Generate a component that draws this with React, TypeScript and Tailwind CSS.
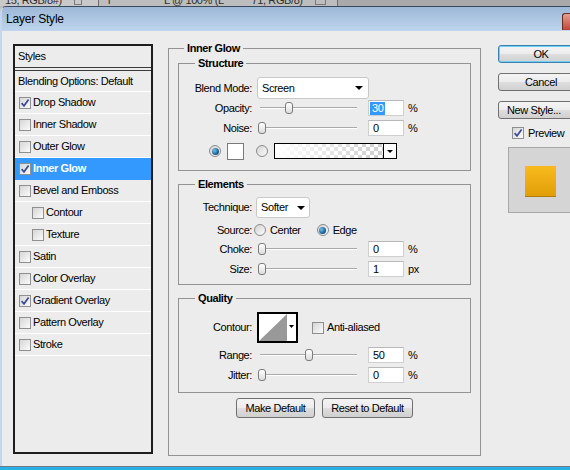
import React from "react";

type Item = { label: string; checked?: boolean; active?: boolean; sub?: boolean };

const styleItems: Item[] = [
  { label: "Drop Shadow", checked: true },
  { label: "Inner Shadow" },
  { label: "Outer Glow" },
  { label: "Inner Glow", checked: true, active: true },
  { label: "Bevel and Emboss" },
  { label: "Contour", sub: true },
  { label: "Texture", sub: true },
  { label: "Satin" },
  { label: "Color Overlay" },
  { label: "Gradient Overlay", checked: true },
  { label: "Pattern Overlay" },
  { label: "Stroke" },
];

function Check({ checked }: { checked?: boolean }) {
  return (
    <span className="flex h-[12px] w-[12px] shrink-0 items-center justify-center border border-[#8e8f8f] bg-gradient-to-br from-[#d6d6d6] to-[#fbfbfb]">
      {checked && (
        <svg width="10" height="10" viewBox="0 0 10 10">
          <path d="M1.6 5.2 L4 7.8 L8.6 1.6" fill="none" stroke="#3b4a96" strokeWidth="1.7" />
        </svg>
      )}
    </span>
  );
}

function Radio({ on }: { on?: boolean }) {
  return (
    <span className="flex h-[12px] w-[12px] shrink-0 items-center justify-center rounded-full border border-[#8a8a8a] bg-gradient-to-br from-[#d4d4d4] to-[#fbfbfb]">
      {on && <span className="h-[7px] w-[7px] rounded-full bg-[radial-gradient(circle_at_35%_35%,#6ec0ee,#0f5588_70%)]" />}
    </span>
  );
}

function Slider({ value }: { value: number }) {
  // thumb position from the value
  const left = Math.max(-2, Math.round((value * 97) / 100) - 4);
  return (
    <div className="relative ml-[8px] h-[14px] w-[97px] shrink-0">
      <div className="absolute left-0 right-0 top-[6px] h-[2px] border-t border-b border-t-[#a9a9a9] border-b-white" />
      <div
        className="absolute top-[1px] h-[12px] w-[8px] rounded-[3px] border border-[#7b7b7b] bg-gradient-to-b from-white to-[#dcdcdc]"
        style={{ left }}
      />
    </div>
  );
}

function NumBox({ value, selected }: { value: string; selected?: boolean }) {
  return (
    <div className="ml-[11px] flex h-[16px] w-[36px] shrink-0 items-center border border-[#cfcfcf] border-t-[#b8b8b8] bg-white pl-[1px]">
      {selected ? (
        <span className="bg-[#3399ff] px-[2px] leading-[13px] text-white">{value}</span>
      ) : (
        <span className="px-[3px]">{value}</span>
      )}
    </div>
  );
}

function Select({ value, className }: { value: string; className: string }) {
  return (
    <div className={"flex shrink-0 items-center justify-between rounded-[3px] border border-[#c8c8c8] bg-white pl-[4px] " + className}>
      <span>{value}</span>
      <svg width="8" height="4" viewBox="0 0 8 4">
        <polygon points="0,0 8,0 4,4" fill="#000" />
      </svg>
    </div>
  );
}

function Row({ label, className, children }: { label: string; className: string; children?: React.ReactNode }) {
  return (
    <div className={"flex items-center " + className}>
      <span className="w-[73px] shrink-0 text-right">{label}</span>
      {children}
    </div>
  );
}

function Group({ title, className, children }: { title: string; className: string; children?: React.ReactNode }) {
  return (
    <fieldset className={"border border-[#939393] " + className}>
      <legend className="ml-[16px] px-[3px] font-bold">{title}</legend>
      {children}
    </fieldset>
  );
}

function Btn({ className, children }: { className: string; children?: React.ReactNode }) {
  return (
    <div
      className={
        "flex shrink-0 items-center justify-center rounded-[3px] border bg-[linear-gradient(#f4f4f4,#ececec_50%,#dedede_50%,#d0d0d0)] " +
        className
      }
    >
      {children}
    </div>
  );
}

function GradientBox() {
  return (
    <svg width="123" height="16" viewBox="0 0 123 16" className="ml-[6px]">
      <defs>
        <pattern id="chk" width="8" height="8" patternUnits="userSpaceOnUse">
          <rect width="8" height="8" fill="#fff" />
          <rect width="4" height="4" fill="#cdcdcd" />
          <rect x="4" y="4" width="4" height="4" fill="#cdcdcd" />
        </pattern>
        <linearGradient id="fade" x1="0" x2="1" y1="0" y2="0">
          <stop offset="0" stopColor="#fff" stopOpacity="1" />
          <stop offset="1" stopColor="#fff" stopOpacity="0" />
        </linearGradient>
      </defs>
      <rect x="0.5" y="0.5" width="122" height="15" fill="#fff" stroke="#000" />
      <rect x="1" y="1" width="108" height="14" fill="url(#chk)" />
      <rect x="1" y="1" width="108" height="14" fill="url(#fade)" />
      <line x1="109.5" y1="1" x2="109.5" y2="15" stroke="#000" />
      <polygon points="113,7 119,7 116,10" fill="#000" />
    </svg>
  );
}

function ContourBox() {
  return (
    <svg width="41" height="31" viewBox="0 0 41 31" className="ml-[5px] shrink-0">
      <rect x="1" y="1" width="39" height="29" fill="#fff" stroke="#000" strokeWidth="2" />
      <polygon points="2,29 30,2 30,29" fill="#999" />
      <polygon points="32,13 37,13 34.5,16" fill="#000" />
    </svg>
  );
}

function TabStrip() {
  return (
    <div className="flex h-[6px] shrink-0 overflow-hidden whitespace-nowrap text-[#2e2e2e]">
      <div className="flex w-[98px] shrink-0 bg-[#c9c9c9] pl-[5px]">
        <span className="-mt-[6px]">15, RGB/8#) *</span>
        <span className="-mt-[3px] ml-[6px] h-[8px] w-[8px] border border-[#7a7a7a]" />
      </div>
      <div className="w-[1px] shrink-0 bg-[#6d6d6d]" />
      <div className="flex w-[238px] shrink-0 bg-[#bdbdbd] pl-[9px]">
        <span className="-mt-[6px]">i</span>
        <span className="-mt-[6px] ml-[54px]">L @ 100% (L</span>
        <span className="-mt-[6px] ml-[28px]">71, RGB/8) *</span>
        <span className="-mt-[3px] ml-[6px] h-[8px] w-[11px] border border-[#7a7a7a]" />
      </div>
      <div className="w-[1px] shrink-0 bg-[#6d6d6d]" />
      <div className="flex-1 bg-[#a9a9a9]" />
    </div>
  );
}

export default function App() {
  return (
    <div className="flex h-[470px] w-[570px] flex-col overflow-hidden bg-[#bdbdbd] font-['Liberation_Sans',Arial,sans-serif] text-[11px] leading-[13px] tracking-[-0.4px] text-black">
      <TabStrip />
      <div className="flex flex-1 flex-col overflow-hidden rounded-tl-[6px] border-t border-l-2 border-t-[#3a4a5c] border-l-[#c6d7ec]">
        {/* title bar */}
        <div className="flex h-[24px] shrink-0 items-center bg-gradient-to-b from-[#9db8d7] to-[#bed5ed] pl-[4px]">
          <span className="text-[12px] tracking-[-0.2px]">Layer Style</span>
          <div className="ml-auto mt-[4px] h-[17px] w-[8px] rounded-tl-[3px] border-t border-l border-[#6b2a22] bg-gradient-to-b from-[#e2a095] to-[#c0412f]" />
        </div>

        <div className="flex flex-1 items-start overflow-hidden bg-[#ececec] pl-[11px]">
          {/* styles list */}
          <div className="mt-[13px] h-[410px] w-[140px] shrink-0 border-2 border-[#1e1e1e]">
            <div className="flex h-[21px] items-center pl-[3px]">Styles</div>
            <div className="h-[4px] border-y border-[#3a3a3a]" />
            <div className="flex h-[21px] items-center border-b border-white pl-[3px]">Blending Options: Default</div>
            {styleItems.map((it) => (
              <div
                key={it.label}
                className={
                  "flex h-[22px] items-center border-b " +
                  (it.active ? "border-[#3399ff] bg-[#3399ff] font-bold text-white " : "border-white ") +
                  (it.sub ? "pl-[17px]" : "pl-[4px]")
                }
              >
                <Check checked={it.checked} />
                <span className="ml-[2px]">{it.label}</span>
              </div>
            ))}
          </div>

          {/* options */}
          <fieldset className="ml-[15px] mt-[11px] h-[414px] w-[313px] shrink-0 border border-[#939393] px-[9px]">
            <legend className="ml-[6px] px-[3px] font-bold">Inner Glow</legend>

            <Group title="Structure" className="mt-[2px] pb-[10px]">
              <Row label="Blend Mode:" className="mt-[7px] h-[22px]">
                <Select value="Screen" className="ml-[5px] h-[22px] w-[112px] pr-[5px]" />
              </Row>
              <Row label="Opacity:" className="h-[18px]">
                <Slider value={30} />
                <NumBox value="30" selected />
                <span className="ml-[4px]">%</span>
              </Row>
              <Row label="Noise:" className="mt-[2px] h-[18px]">
                <Slider value={0} />
                <NumBox value="0" />
                <span className="ml-[4px]">%</span>
              </Row>
              <div className="mt-[5px] flex h-[18px] items-center pl-[30px]">
                <Radio on />
                <span className="ml-[6px] h-[17px] w-[17px] border border-[#7a7a7a] bg-white" />
                <span className="ml-[12px]">
                  <Radio />
                </span>
                <GradientBox />
              </div>
            </Group>

            <Group title="Elements" className="mt-[7px] pb-[6px]">
              <Row label="Technique:" className="mt-[6px] h-[21px]">
                <Select value="Softer" className="ml-[4px] h-[21px] w-[54px] pr-[4px]" />
              </Row>
              <Row label="Source:" className="mt-[3px] h-[18px]">
                <span className="ml-[2px]">
                  <Radio />
                </span>
                <span className="ml-[4px]">Center</span>
                <span className="ml-[16px]">
                  <Radio on />
                </span>
                <span className="ml-[4px]">Edge</span>
              </Row>
              <Row label="Choke:" className="mt-[1px] h-[18px]">
                <Slider value={0} />
                <NumBox value="0" />
                <span className="ml-[4px]">%</span>
              </Row>
              <Row label="Size:" className="mt-[2px] h-[18px]">
                <Slider value={0} />
                <NumBox value="1" />
                <span className="ml-[4px]">px</span>
              </Row>
            </Group>

            <Group title="Quality" className="mt-[7px] pb-[8px]">
              <Row label="Contour:" className="mt-[7px] h-[31px]">
                <ContourBox />
                <span className="ml-[14px]">
                  <Check />
                </span>
                <span className="ml-[3px]">Anti-aliased</span>
              </Row>
              <Row label="Range:" className="mt-[3px] h-[18px]">
                <Slider value={50} />
                <NumBox value="50" />
                <span className="ml-[4px]">%</span>
              </Row>
              <Row label="Jitter:" className="mt-[2px] h-[18px]">
                <Slider value={0} />
                <NumBox value="0" />
                <span className="ml-[4px]">%</span>
              </Row>
            </Group>

            <div className="mt-[5px] flex justify-center gap-[7px]">
              <Btn className="h-[20px] w-[79px] border-[#707070]">Make Default</Btn>
              <Btn className="h-[20px] w-[91px] border-[#707070]">Reset to Default</Btn>
            </div>
          </fieldset>

          {/* buttons and preview */}
          <div className="ml-[17px] mt-[14px] flex w-[86px] shrink-0 flex-col">
            <Btn className="h-[18px] border-[#3c7fb1] shadow-[inset_0_0_0_1px_#6fd0f5]">OK</Btn>
            <Btn className="mt-[10px] h-[18px] border-[#707070]">Cancel</Btn>
            <Btn className="mt-[10px] h-[18px] justify-start border-[#707070] pl-[8px]">New Style...</Btn>
            <div className="mt-[8px] flex h-[12px] items-center pl-[14px]">
              <Check checked />
              <span className="ml-[4px]">Preview</span>
            </div>
            <div className="ml-[10px] mt-[8px] flex h-[66px] w-[65px] items-start justify-center border border-[#a8a8a8] bg-[#d5d5d5] pt-[18px]">
              <div className="h-[31px] w-[31px] border-b border-[#b07b0c] bg-gradient-to-b from-[#f7bb1d] to-[#e29e06]" />
            </div>
          </div>
        </div>
      </div>
      <div className="h-[1px] shrink-0 bg-[#6f7a85]" />
      <div className="h-[3px] shrink-0 bg-[#29b0e6]" />
    </div>
  );
}
